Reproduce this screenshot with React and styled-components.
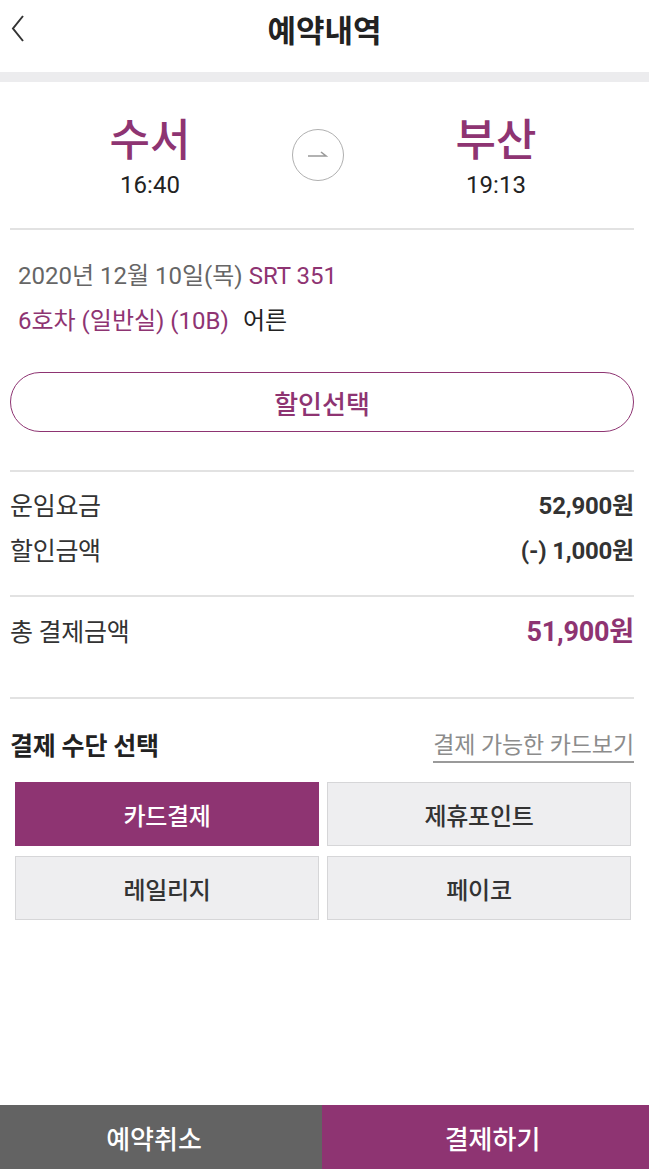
import React, {useState} from 'react';
import styled, {createGlobalStyle} from 'styled-components';

const PURPLE = '#8e3472';

const GlobalStyle = createGlobalStyle`
    html, body {
        margin: 0;
        padding: 0;
        background: #fff;
    }
    body {
        font-family: "Roboto", "Noto Sans CJK KR", sans-serif;
        color: #222;
    }
    * { box-sizing: border-box; }
`

const Page = styled.div`
    width: 649px;
    min-height: 100vh;
    display: flex;
    flex-direction: column;
`

const Header = styled.header`
    height: 72px;
    display: flex;
    align-items: center;
    justify-content: center;
    position: relative;
`

const BackButton = styled.button`
    position: absolute;
    left: 6px;
    top: 11px;
    width: 28px;
    height: 36px;
    padding: 0;
    border: none;
    background: none;
    cursor: pointer;
`

const Title = styled.h1`
    margin: 0 0 16px;
    font-size: 31px;
    font-weight: 700;
    color: #222;
`

const Band = styled.div`
    height: 10px;
    background: #ececee;
`

const Route = styled.section`
    height: 146px;
    display: flex;
    align-items: center;
    padding: 0 0 0 70px;
`

const Station = styled.div`
    width: 160px;
    display: flex;
    flex-direction: column;
    align-items: center;
    margin-top: 4px;
`

const StationName = styled.div`
    font-size: 44px;
    font-weight: 500;
    color: ${PURPLE};
    line-height: 50px;
`

const StationTime = styled.div`
    font-size: 24px;
    color: #222;
    line-height: 28px;
    margin-top: 5px;
`

const ArrowCircle = styled.div`
    width: 52px;
    height: 52px;
    border: 1.5px solid #b0b0b0;
    border-radius: 50%;
    display: flex;
    align-items: center;
    justify-content: center;
    margin: 0 ${props => props.right}px 0 62px;
`

const Divider = styled.hr`
    margin: 0 15px 0 10px;
    border: none;
    height: 2px;
    background: #e2e2e2;
`

const Info = styled.section`
    padding: 24px 10px 0 18px;
`

const InfoLine = styled.div`
    font-size: 24px;
    line-height: 45px;
    color: ${props => props.color || '#666'};
`

const Accent = styled.span`
    color: ${PURPLE};
    margin-right: ${props => props.gap || 0}px;
`

const DiscountButton = styled.button`
    display: block;
    width: 624px;
    height: 60px;
    margin: 28px 0 38px 10px;
    border: 1.5px solid ${PURPLE};
    border-radius: 30px;
    background: #fff;
    color: ${PURPLE};
    font-family: inherit;
    font-size: 26px;
    font-weight: 500;
    cursor: pointer;
`

const Rows = styled.section`
    padding: ${props => props.pad};
`

const Row = styled.div`
    display: flex;
    justify-content: space-between;
    align-items: center;
    height: 45px;
    padding: 0 15px 0 10px;
`

const Label = styled.span`
    font-size: 25px;
    color: #333;
    letter-spacing: -0.3px;
`

const Amount = styled.span`
    font-size: ${props => props.big ? 27 : 24}px;
    font-weight: 700;
    color: ${props => props.accent ? PURPLE : '#333'};
    letter-spacing: -0.2px;
`

const PayHead = styled.div`
    display: flex;
    justify-content: space-between;
    align-items: center;
    height: 40px;
    margin-top: 25px;
    padding: 0 15px 0 10px;
`

const PayTitle = styled.h2`
    margin: 0;
    font-size: 25px;
    font-weight: 700;
    color: #222;
    letter-spacing: -0.2px;
`

const CardLink = styled.a`
    font-size: 23px;
    color: #8c8c8c;
    text-decoration: none;
    border-bottom: 2px solid #9a9a9a;
    line-height: 30px;
    margin-top: 6px;
    letter-spacing: -0.1px;
    cursor: pointer;
`

const PayGrid = styled.div`
    display: grid;
    grid-template-columns: 1fr 1fr;
    gap: 10px 8px;
    margin: 18px 18px 0 15px;
`

const PayButton = styled.button`
    height: 64px;
    border: 1.5px solid ${props => props.active ? PURPLE : '#d6d6d8'};
    background: ${props => props.active ? PURPLE : '#eeeef0'};
    color: ${props => props.active ? '#fff' : '#333'};
    font-family: inherit;
    font-size: 24px;
    font-weight: 500;
    letter-spacing: -0.3px;
    cursor: pointer;
`

const Footer = styled.footer`
    margin-top: auto;
    display: grid;
    grid-template-columns: 322px 1fr;
    height: 64px;
`

const FooterButton = styled.button`
    border: none;
    background: ${props => props.bg};
    color: #fff;
    font-family: inherit;
    font-size: 26px;
    font-weight: 500;
    padding: 0 ${props => props.shiftRight}px 0 ${props => props.shiftLeft}px;
    cursor: pointer;
`

const methods = ['카드결제', '제휴포인트', '레일리지', '페이코'];

const App = () => {
    const [method, setMethod] = useState('카드결제');

    return (
        <Page>
            <GlobalStyle/>
            <Header>
                <BackButton aria-label="back">
                    <svg width="28" height="36" viewBox="0 0 28 36">
                        <path d="M17 5 L7 17.5 L17 30" fill="none" stroke="#333" strokeWidth="2"/>
                    </svg>
                </BackButton>
                <Title>예약내역</Title>
            </Header>
            <Band/>

            <Route>
                <Station>
                    <StationName>수서</StationName>
                    <StationTime>16:40</StationTime>
                </Station>
                <ArrowCircle right={72}>
                    <svg width="26" height="14" viewBox="0 0 26 14">
                        <path d="M3 8 H21 L16 4" fill="none" stroke="#999" strokeWidth="1.6"/>
                    </svg>
                </ArrowCircle>
                <Station>
                    <StationName>부산</StationName>
                    <StationTime>19:13</StationTime>
                </Station>
            </Route>
            <Divider/>

            <Info>
                <InfoLine>2020년 12월 10일(목) <Accent>SRT 351</Accent></InfoLine>
                <InfoLine color="#222"><Accent gap={14}>6호차 (일반실) (10B)</Accent>어른</InfoLine>
            </Info>
            <DiscountButton>할인선택</DiscountButton>
            <Divider/>

            <Rows pad="9px 0 24px">
                <Row>
                    <Label>운임요금</Label>
                    <Amount>52,900원</Amount>
                </Row>
                <Row>
                    <Label>할인금액</Label>
                    <Amount>(-) 1,000원</Amount>
                </Row>
            </Rows>
            <Divider/>

            <Rows pad="10px 0 45px">
                <Row>
                    <Label>총 결제금액</Label>
                    <Amount accent big>51,900원</Amount>
                </Row>
            </Rows>
            <Divider/>

            <PayHead>
                <PayTitle>결제 수단 선택</PayTitle>
                <CardLink>결제 가능한 카드보기</CardLink>
            </PayHead>
            <PayGrid>
                {methods.map(m => (
                    <PayButton key={m} active={m === method} onClick={() => setMethod(m)}>
                        {m}
                    </PayButton>
                ))}
            </PayGrid>

            <Footer>
                <FooterButton bg="#636363" shiftLeft={0} shiftRight={14}>예약취소</FooterButton>
                <FooterButton bg={PURPLE} shiftLeft={14} shiftRight={0}>결제하기</FooterButton>
            </Footer>
        </Page>
    );
};

export default App;
